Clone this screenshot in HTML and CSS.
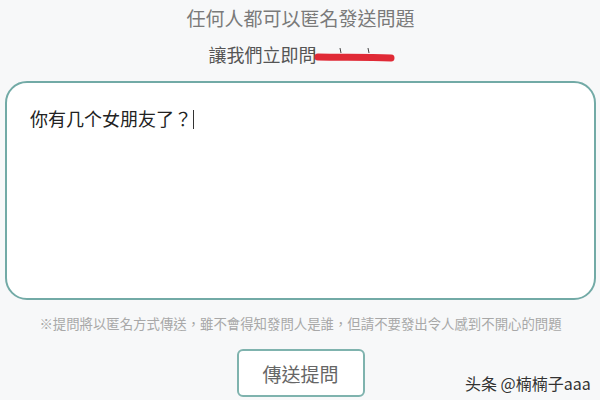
FILE: index.html
```html
<!DOCTYPE html>
<html lang="zh-Hant">
<head>
    <meta charset="UTF-8">
    <meta name="viewport" content="width=device-width, initial-scale=1.0">
    <title>匿名提問</title>
    <link rel="stylesheet" href="styles.css">
</head>
<body>
    <div class="page">
        <h1 class="title">任何人都可以匿名發送問題</h1>
        <div class="subtitle">
            <span>讓我們立即問</span>
            <svg class="scribble" width="86" height="20" viewBox="0 0 86 20">
                <path d="M3 4 l1 10" stroke="#555" stroke-width="1" fill="none"/>
                <path d="M7 12 C25 12.5, 55 11.5, 80 13" stroke="#e02a36" stroke-width="7" stroke-linecap="round" fill="none"/>
                <path d="M29 3 l1 5 M57 3 l1 5" stroke="#444" stroke-width="1" fill="none"/>
            </svg>
        </div>

        <div class="question-box">
            <div class="question-text">你有几个女朋友了？<span class="caret"></span></div>
        </div>

        <p class="note">※提問將以匿名方式傳送，雖不會得知發問人是誰，但請不要發出令人感到不開心的問題</p>

        <button class="send-btn">傳送提問</button>
    </div>

    <div class="watermark">头条 @楠楠子aaa</div>
</body>
</html>
```

FILE: styles.css
```css
* {
    box-sizing: border-box;
    margin: 0;
    padding: 0;
}

body {
    font-family: 'Noto Sans CJK TC', 'Noto Sans CJK SC', sans-serif;
    background-color: #f7f8f9;
    width: 600px;
    height: 400px;
    overflow: hidden;
    position: relative;
}

.page {
    display: flex;
    flex-direction: column;
    align-items: center;
    padding: 5px 4px 0 5px;
}

.title {
    font-size: 19px;
    font-weight: normal;
    color: #7a7a7a;
    line-height: 26px;
}

.subtitle {
    display: flex;
    align-items: center;
    margin-top: 10px;
    margin-left: 4px;
    font-size: 18px;
    color: #555;
    line-height: 26px;
}

.scribble {
    margin-left: -6px;
    margin-top: 2px;
}

.question-box {
    align-self: stretch;
    margin-top: 14px;
    height: 219px;
    background-color: #fff;
    border: 2px solid #72aaa6;
    border-radius: 22px;
    padding: 22px 23px;
}

.question-text {
    font-size: 18px;
    color: #222;
    line-height: 26px;
}

.caret {
    display: inline-block;
    width: 1px;
    height: 19px;
    background-color: #333;
    vertical-align: -3px;
    margin-left: 1px;
}

.note {
    margin-top: 13px;
    font-size: 13.4px;
    color: #a8a8a8;
    line-height: 20px;
}

.send-btn {
    margin-top: 16px;
    width: 128px;
    height: 48px;
    background-color: #fff;
    border: 2px solid #7fb3ae;
    border-radius: 6px;
    font-family: inherit;
    font-size: 19px;
    color: #666;
}

.watermark {
    position: absolute;
    left: 465px;
    top: 371px;
    font-size: 16px;
    color: #333;
    text-shadow: 0 0 2px #fff;
}
```
